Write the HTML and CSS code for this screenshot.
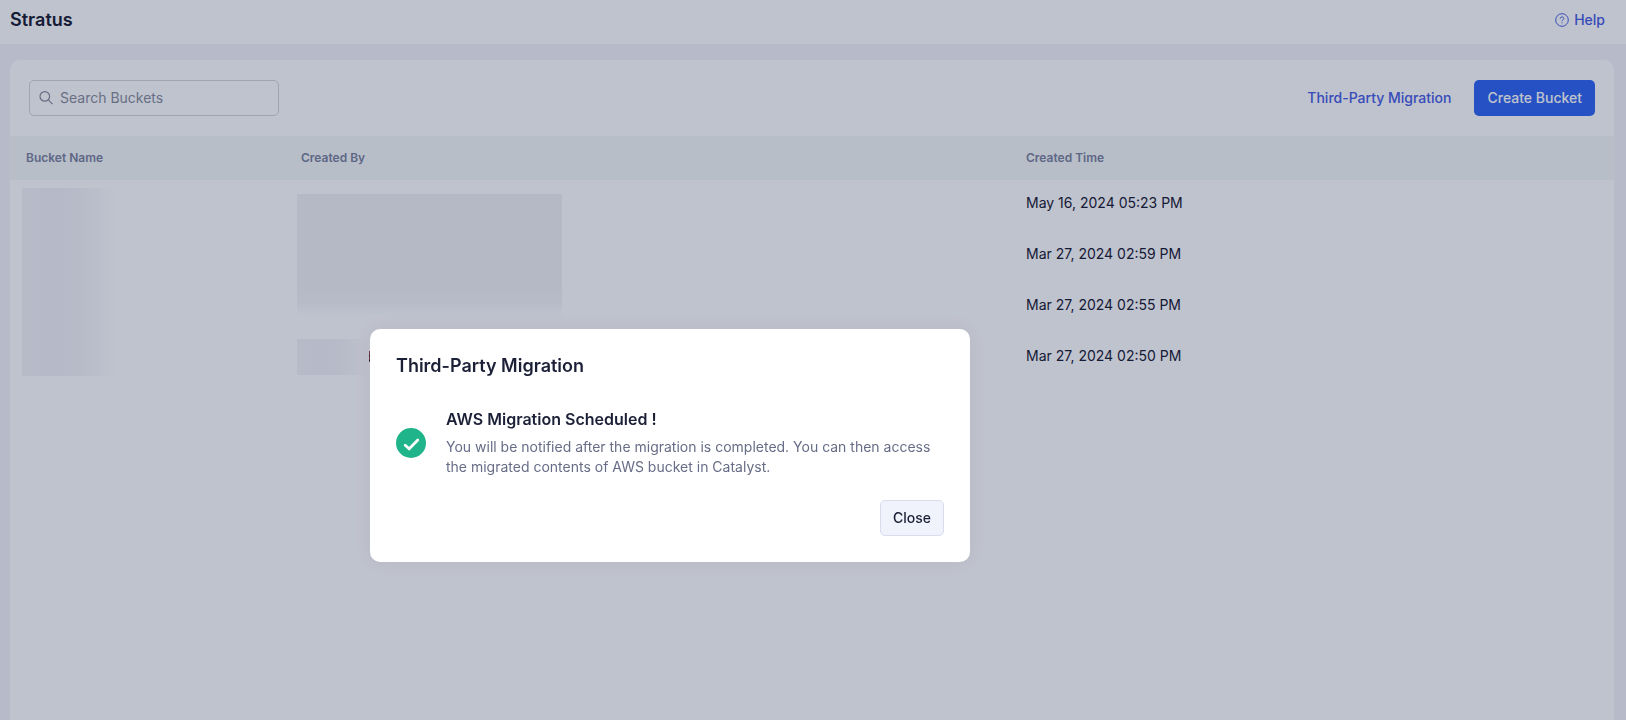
FILE: index.html
```html
<!doctype html>
<html lang="en">
<head>
    <meta charset="UTF-8">
    <meta name="viewport" content="width=device-width, initial-scale=1.0">
    <title>Stratus</title>
    <link rel="stylesheet" href="styles.css">
</head>
<body>
<header class="topbar">
    <h1 class="page-title">Stratus</h1>
    <a class="help" href="#">
        <svg width="14" height="14" viewBox="0 0 14 14" fill="none" stroke="currentColor" aria-hidden="true">
            <circle cx="7" cy="7" r="6.3"/>
            <path d="M5.2 5.7c0-1.1.8-1.8 1.8-1.8s1.8.7 1.8 1.6c0 1.2-1.8 1.3-1.8 2.6M7 9.3v1"/>
        </svg>
        Help
    </a>
</header>
<main class="card">
    <div class="toolbar">
        <label class="search">
            <svg width="14" height="14" viewBox="0 0 14 14" fill="none" stroke="currentColor" stroke-width="1.2" aria-hidden="true">
                <circle cx="5.8" cy="5.4" r="4.8"/>
                <path d="M9.3 8.9l4.2 4.2"/>
            </svg>
            <input type="text" placeholder="Search Buckets" aria-label="Search Buckets">
        </label>
        <div class="actions">
            <a class="link" href="#">Third-Party Migration</a>
            <button class="btn btn-primary">Create Bucket</button>
        </div>
    </div>
    <table class="buckets">
        <thead>
        <tr>
            <th class="col-name">Bucket Name</th>
            <th class="col-user">Created By</th>
            <th>Created Time</th>
        </tr>
        </thead>
        <tbody>
        <tr>
            <td class="masked" rowspan="4"><div class="mask mask-names"></div></td>
            <td class="masked" rowspan="3"><div class="mask mask-users"></div></td>
            <td>May 16, 2024 05:23 PM</td>
        </tr>
        <tr>
            <td>Mar 27, 2024 02:59 PM</td>
        </tr>
        <tr>
            <td>Mar 27, 2024 02:55 PM</td>
        </tr>
        <tr>
            <td class="masked"><div class="user"><div class="mask mask-user"></div><span class="user-end">d</span></div></td>
            <td>Mar 27, 2024 02:50 PM</td>
        </tr>
        </tbody>
    </table>
</main>
<div class="overlay">
    <div class="dialog" role="dialog" aria-labelledby="dialogTitle">
        <h2 class="dialog-title" id="dialogTitle">Third-Party Migration</h2>
        <div class="dialog-body">
            <svg class="check" width="30" height="30" viewBox="0 0 30 30" fill="none" aria-hidden="true">
                <circle cx="15" cy="15" r="15" fill="#20b48a"/>
                <path d="M9.2 17.2l4 3.6 8.6-8.8" stroke="#fff" stroke-width="2.7" stroke-linecap="round"/>
            </svg>
            <div>
                <h3 class="status">AWS Migration Scheduled !</h3>
                <p class="message">You will be notified after the migration is completed. You can then access the migrated contents of AWS bucket in Catalyst.</p>
            </div>
        </div>
        <div class="dialog-footer">
            <button class="btn btn-default">Close</button>
        </div>
    </div>
</div>
</body>
</html>
```
FILE: styles.css
```css
* {
    box-sizing: border-box;
}

body {
    margin: 0;
    min-height: 100vh;
    display: flex;
    flex-direction: column;
    background: #f4f4fa;
    color: #1c2036;
    font-family: Inter, "Liberation Sans", sans-serif;
    font-size: 14px;
    line-height: 20px;
}

h1, h2, h3, p {
    margin: 0;
}

a {
    color: #4a60e6;
    font-weight: 500;
    text-decoration: none;
}

.topbar {
    height: 44px;
    padding: 0 21px 4px 10px;
    display: flex;
    align-items: center;
    justify-content: space-between;
    background: #fff;
}

.page-title {
    font-size: 18px;
    font-weight: 600;
}

.help {
    display: flex;
    align-items: center;
    gap: 5px;
}

.card {
    flex: 1;
    margin: 16px 12px 0 10px;
    background: #fff;
    border-radius: 10px 10px 0 0;
}

.toolbar {
    padding: 20px 19px;
    display: flex;
    align-items: center;
    justify-content: space-between;
}

.search {
    width: 250px;
    height: 36px;
    padding: 0 9px;
    display: flex;
    align-items: center;
    gap: 7px;
    border: 1px solid #d6d7de;
    border-radius: 5px;
    color: #8b8f9f;
}

.search input {
    flex: 1;
    min-width: 0;
    padding: 0;
    border: 0;
    outline: 0;
    background: none;
    font: inherit;
}

.search input::placeholder {
    color: #8b8f9f;
    opacity: 1;
}

.actions {
    display: flex;
    align-items: center;
    gap: 23px;
}

.btn {
    height: 36px;
    padding: 0 12px;
    border: 1px solid transparent;
    border-radius: 5px;
    font: inherit;
    font-weight: 500;
    cursor: pointer;
}

.btn-primary {
    background: #3367f3;
    color: #fff;
}

.btn-default {
    background: #f0f3fc;
    border-color: #d9dcea;
    color: #1c2036;
}

.buckets {
    width: 100%;
    border-collapse: collapse;
    table-layout: fixed;
}

.buckets th {
    height: 44px;
    padding: 0 16px;
    background: #f4f8f8;
    color: #7e849f;
    font-size: 12px;
    font-weight: 600;
    text-align: left;
}

.buckets td {
    height: 51px;
    padding: 0 16px 5px;
}

.col-name {
    width: 275px;
}

.col-user {
    width: 725px;
}

.buckets .masked {
    padding: 0 12px;
    vertical-align: top;
}

/* hidden bucket and user names */
.mask {
    background: linear-gradient(90deg, #f4f4f9, #f2f2f8 45%, #f8f8fb 75%, #fff);
}

.mask-names {
    width: 94px;
    height: 188px;
    margin-top: 8px;
}

.mask-users {
    width: 265px;
    height: 122px;
    margin-top: 14px;
    background: linear-gradient(180deg, #f2f2f5, #f2f2f5 75%, #f5f5f9 90%, #fff);
}

.mask-user {
    width: 72px;
    height: 36px;
    z-index: 1;
}

.user {
    margin-top: 6px;
    display: flex;
    align-items: center;
}

.user-end {
    margin-left: -6px;
}

.overlay {
    position: fixed;
    inset: 0;
    z-index: 2;
    padding: 170px 286px 0 0;
    display: flex;
    align-items: center;
    justify-content: center;
    background: rgba(0, 15, 55, 0.25);
}

.dialog {
    width: 600px;
    padding: 26px;
    background: #fff;
    border-radius: 10px;
    box-shadow: 0 0 20px rgba(20, 20, 30, 0.05);
}

.dialog-title {
    font-size: 18px;
    font-weight: 600;
    line-height: 22px;
}

.dialog-body {
    margin-top: 32px;
    display: flex;
    align-items: center;
    gap: 20px;
}

.check {
    flex-shrink: 0;
}

.status {
    font-size: 16px;
    font-weight: 600;
}

.message {
    margin-top: 8px;
    color: #686d87;
}

.dialog-footer {
    margin-top: 23px;
    display: flex;
    justify-content: flex-end;
}
```
